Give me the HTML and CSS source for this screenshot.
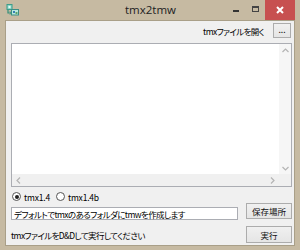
FILE: index.html
```html
<!DOCTYPE html>
<html lang="ja">
<head>
  <meta charset="UTF-8" />
  <title>tmx2tmw</title>
  <link rel="stylesheet" href="styles.css">
</head>
<body>
  <div class="window">
    <!-- barra de título -->
    <div class="titlebar">
      <div class="tb-left">
        <svg class="app-icon" width="13" height="12" viewBox="0 0 13 12">
          <rect x="1" y="0.5" width="5" height="5" fill="#8fd6c6" stroke="#3c9c8a" stroke-width="1"/>
          <rect x="2.5" y="2" width="2" height="2" fill="#e8fbf6"/>
          <rect x="5.5" y="5.5" width="7" height="5.5" fill="#b9e8de" stroke="#3b8f86" stroke-width="1"/>
          <path d="M2 6 L2 9 L5 9" fill="none" stroke="#2f8f7a" stroke-width="1.2"/>
          <path d="M4 7.5 L5.5 9 L4 10.5" fill="none" stroke="#2f8f7a" stroke-width="1"/>
          <rect x="7" y="7" width="2" height="2" fill="#3a7fb5"/>
          <rect x="9.5" y="8" width="2" height="2" fill="#5aa16a"/>
        </svg>
      </div>
      <div class="title">tmx2tmw</div>
      <div class="tb-right">
        <div class="cap-btn min"><span></span></div>
        <div class="cap-btn max"><span></span></div>
        <div class="cap-btn close">
          <svg width="8" height="8" viewBox="0 0 8 8">
            <path d="M1 1 L7 7 M7 1 L1 7" stroke="#fff" stroke-width="2"/>
          </svg>
        </div>
      </div>
    </div>

    <!-- area cliente -->
    <div class="client">
      <div class="open-row">
        <span class="lbl">tmxファイルを開く</span>
        <div class="btn small">...</div>
      </div>

      <div class="log">
        <div class="log-body"></div>
        <div class="vscroll">
          <svg width="7" height="5" viewBox="0 0 7 5"><path d="M0.5 4 L3.5 1 L6.5 4" fill="none" stroke="#b4b4b4" stroke-width="1.2"/></svg>
          <svg width="7" height="5" viewBox="0 0 7 5"><path d="M0.5 1 L3.5 4 L6.5 1" fill="none" stroke="#b4b4b4" stroke-width="1.2"/></svg>
        </div>
        <div class="hscroll">
          <svg width="5" height="7" viewBox="0 0 5 7"><path d="M4 0.5 L1 3.5 L4 6.5" fill="none" stroke="#b4b4b4" stroke-width="1.2"/></svg>
          <svg width="5" height="7" viewBox="0 0 5 7"><path d="M1 0.5 L4 3.5 L1 6.5" fill="none" stroke="#b4b4b4" stroke-width="1.2"/></svg>
        </div>
        <div class="corner"></div>
      </div>

      <div class="radio-row">
        <label class="opt"><span class="radio on"></span>tmx1.4</label>
        <label class="opt"><span class="radio"></span>tmx1.4b</label>
      </div>

      <div class="out-row">
        <div class="textbox">デフォルトでtmxのあるフォルダにtmwを作成します</div>
        <div class="btn">保存場所</div>
      </div>

      <div class="run-row">
        <span class="lbl">tmxファイルをD&amp;Dして実行してください</span>
        <div class="btn run">実行</div>
      </div>
    </div>
  </div>
</body>
</html>
```

FILE: styles.css
```css
:root {
  --marco: #c6baa2;
  --marco-borde: #a99f88;
  --fondo: #f0f0f0;
  --borde-caja: #abadb3;
  --borde-btn: #acacac;
  --rojo: #c75050;
}

body {
  margin: 0;
  font-family: "Noto Sans CJK JP", sans-serif;
  font-feature-settings: "palt";
  font-size: 8.5px;
  letter-spacing: -0.6px;
  color: #000;
}

.window {
  width: 300px;
  height: 250px;
  background: var(--marco);
  display: flex;
  flex-direction: column;
  box-sizing: border-box;
}

.titlebar {
  height: 20px;
  display: grid;
  grid-template-columns: 1fr auto 1fr;
  align-items: center;
  padding: 0 5px 0 6px;
}

.tb-left {
  display: flex;
  align-items: center;
}

.app-icon {
  display: block;
  margin-top: -1px;
}

.title {
  font-family: "Open Sans", sans-serif;
  font-feature-settings: normal;
  font-size: 11.5px;
  letter-spacing: 0;
  color: #222;
  margin-top: -1px;
}

.tb-right {
  display: flex;
  justify-content: flex-end;
  height: 20px;
}

.cap-btn {
  height: 20px;
  display: flex;
  align-items: center;
  justify-content: center;
}

.cap-btn.min {
  width: 20px;
}

.cap-btn.min span {
  width: 6px;
  height: 2px;
  background: #333;
  margin-top: 2px;
}

.cap-btn.max {
  width: 19px;
}

.cap-btn.max span {
  width: 5px;
  height: 3px;
  border: 1px solid #444;
  border-top-width: 2px;
  margin-top: -3px;
}

.cap-btn.close {
  width: 30px;
  background: var(--rojo);
}

.cap-btn.close svg {
  margin-top: -1px;
}

.client {
  flex: 1;
  margin: 0 5px 4px 5px;
  border: 1px solid var(--marco-borde);
  background: var(--fondo);
  padding: 2px 2px 0 5px;
  display: flex;
  flex-direction: column;
}

.open-row {
  height: 15px;
  display: flex;
  justify-content: flex-end;
  align-items: center;
  gap: 9px;
}

.btn {
  box-sizing: border-box;
  border: 1px solid var(--borde-btn);
  background: linear-gradient(#f0f0f0, #e5e5e5);
  display: flex;
  align-items: center;
  justify-content: center;
  color: #111;
  letter-spacing: 0;
}

.btn.small {
  width: 18px;
  height: 15px;
  margin-right: 1px;
  line-height: 1;
  padding-bottom: 3px;
}

.log {
  margin-top: 5px;
  height: 144px;
  box-sizing: border-box;
  border: 1px solid var(--borde-caja);
  background: #fff;
  display: grid;
  grid-template-columns: 1fr 12px;
  grid-template-rows: 1fr 12px;
}

.vscroll {
  background: #f6f6f6;
  display: flex;
  flex-direction: column;
  justify-content: space-between;
  align-items: center;
  padding: 4px 0 3px;
}

.hscroll {
  background: var(--fondo);
  display: flex;
  justify-content: space-between;
  align-items: center;
  padding: 0 4px;
}

.corner {
  background: var(--fondo);
}

.radio-row {
  margin-top: 4px;
  height: 11px;
  display: flex;
  align-items: center;
  gap: 6px;
  padding-left: 1px;
}

.opt {
  display: flex;
  align-items: center;
  gap: 3px;
  letter-spacing: -0.2px;
}

.radio {
  width: 9px;
  height: 9px;
  box-sizing: border-box;
  border: 1px solid #555;
  border-radius: 50%;
  background: #fff;
  display: flex;
  align-items: center;
  justify-content: center;
}

.radio.on::after {
  content: "";
  width: 4px;
  height: 4px;
  border-radius: 50%;
  background: #222;
}

.out-row {
  margin-top: 1px;
  display: flex;
  align-items: flex-start;
  gap: 8px;
}

.textbox {
  flex: 1;
  height: 13px;
  margin-top: 4px;
  box-sizing: border-box;
  border: 1px solid var(--borde-caja);
  background: #fff;
  padding-left: 2px;
  display: flex;
  align-items: center;
  white-space: nowrap;
}

.out-row .btn {
  width: 46px;
  height: 16px;
}

.run-row {
  margin-top: 6px;
  display: flex;
  align-items: center;
  justify-content: space-between;
}

.btn.run {
  width: 46px;
  height: 17px;
}
```
